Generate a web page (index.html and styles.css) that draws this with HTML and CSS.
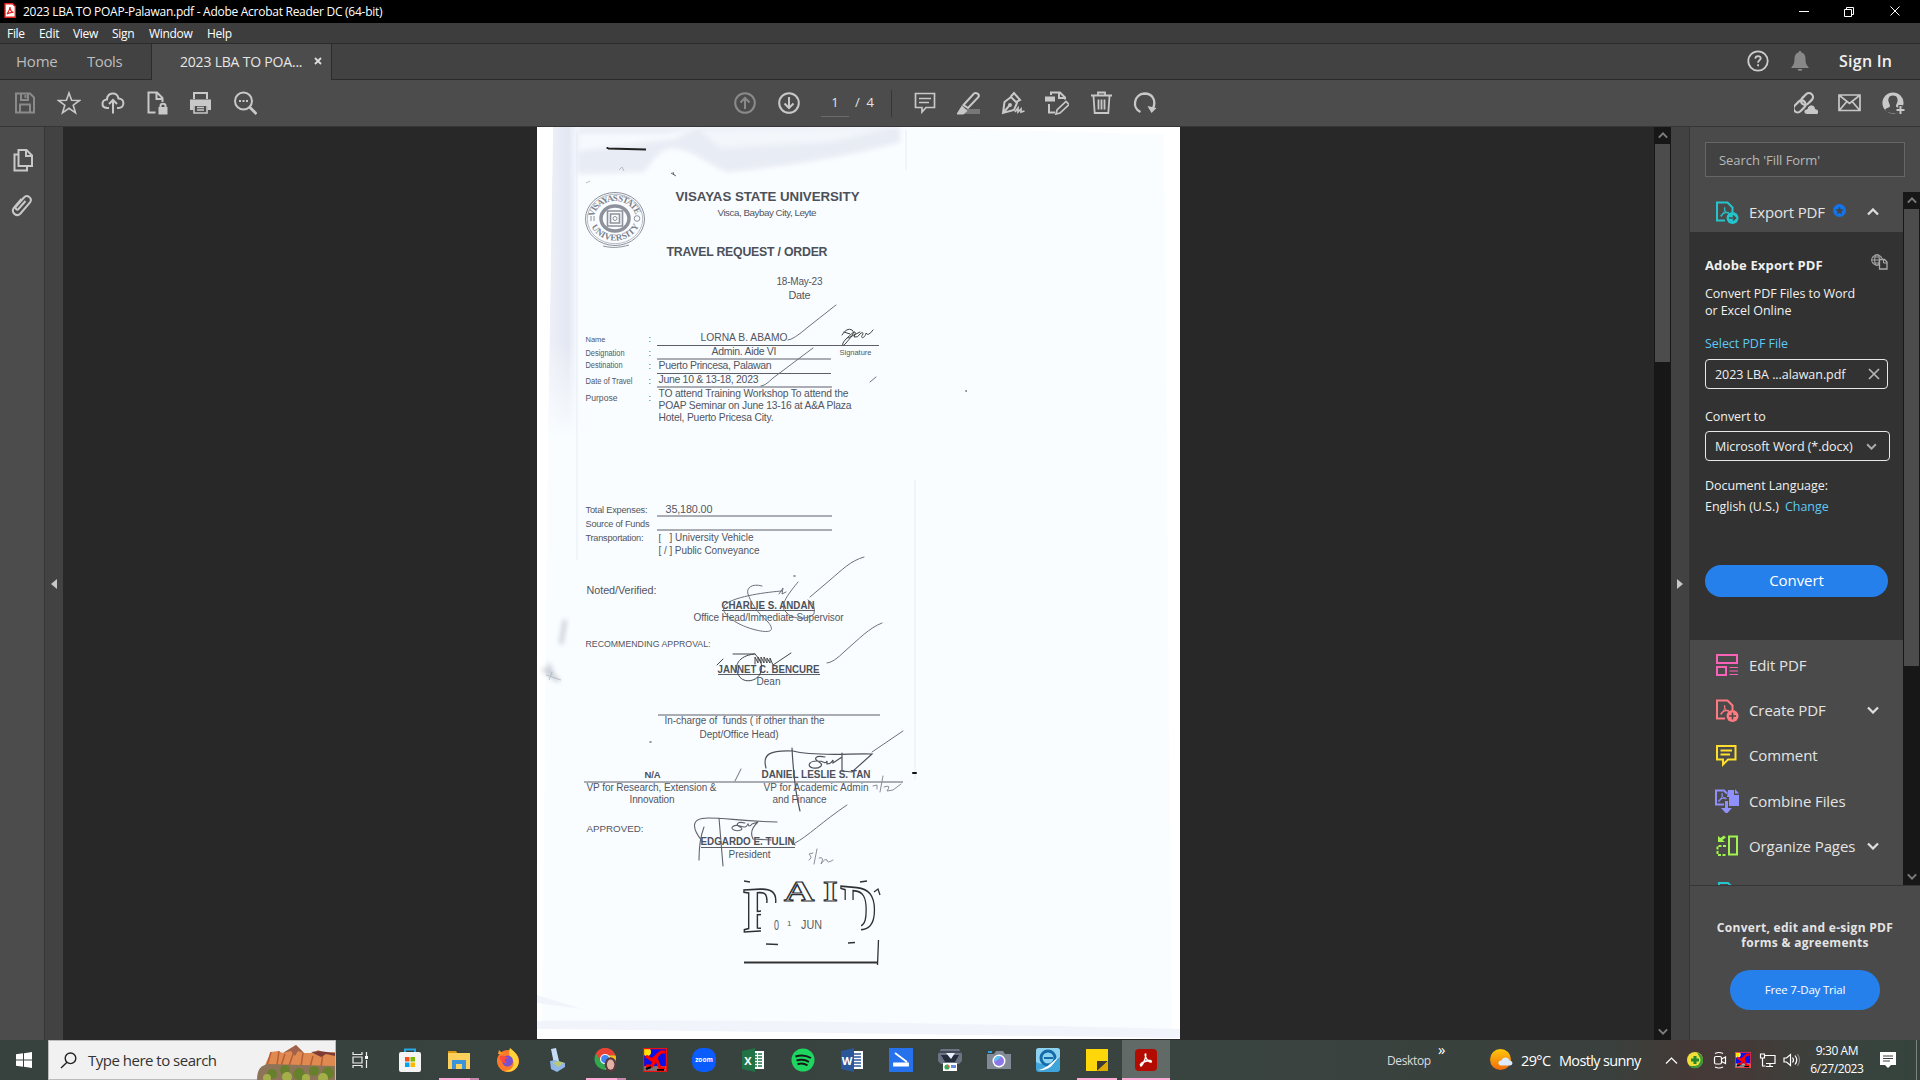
FILE: index.html
```html
<!DOCTYPE html>
<html lang="en">
<head>
<meta charset="utf-8">
<title>2023 LBA TO POAP-Palawan.pdf - Adobe Acrobat Reader DC (64-bit)</title>
<link rel="stylesheet" href="styles.css">
</head>
<body>
<svg class="defs" width="0" height="0">
  <defs>
    <symbol id="acro" viewBox="0 0 16 16"><path d="M2 13c1-2 5-4 11-4.500M7.500 2c-1 0 0 4 2 6s4 3 4 1.500-5-1.300-8 .5-3.500 4-2.500 4S7 8 7.500 5s.5-3 0-3z" fill="none" stroke="currentColor" stroke-width="1.300"/></symbol>
    <symbol id="runner" viewBox="0 0 24 24"><path d="M0 0h24v24H0z" fill="#0a10e8"/><path d="M1 18h22v5H1z" fill="#777"/><circle cx="4" cy="4" r="4" fill="#ffe600"/><path d="M3 8l6 4 9-8 4 0M15 6l-6 12H3M13 10l4 10h5" stroke="#f00" stroke-width="3.200" fill="none"/><path d="M3 21l5-2M14 22h7" stroke="#000" stroke-width="2"/><path d="M.6.600h22.800v22.800H.6z" fill="none" stroke="#e11" stroke-width="1.200"/></symbol>
    <symbol id="chev" viewBox="0 0 12 8"><path d="M1 1.500l5 5 5-5" fill="none" stroke="currentColor" stroke-width="2.300"/></symbol>
  </defs>
</svg>
<div class="window">
  <header class="titlebar">
    <svg class="appicon" width="12" height="15" viewBox="0 0 12 15"><path d="M1 .7h7.500L11.300 3.500v10.800H1z" fill="#fff" stroke="#e2211c" stroke-width="1.400"/><path d="M3 11c1.500-2 3-4 3-7 0 3 1.500 5 3.500 5.500-2-.5-4 0-6.500 1.500z" fill="none" stroke="#e2211c" stroke-width="1.200"/></svg>
    <span class="title">2023 LBA TO POAP-Palawan.pdf - Adobe Acrobat Reader DC (64-bit)</span>
    <svg class="controls" width="104" height="14" viewBox="0 0 104 14" fill="none" stroke="#fff"><path d="M1 7.500h10M46.500 5.500h7v7h-7zM48.500 5.500v-2h7v7h-2M92.500 2.500l9 9M101.500 2.500l-9 9"/></svg>
  </header>
  <nav class="menubar"><span class="m1">File</span><span class="m2">Edit</span><span class="m3">View</span><span class="m4">Sign</span><span class="m5">Window</span><span>Help</span></nav>
  <div class="tabs">
    <div class="tabs-home"><span class="home">Home</span><span class="tools">Tools</span></div>
    <div class="tab"><span>2023 LBA TO POA...</span><svg width="8" height="8" viewBox="0 0 8 8"><path d="M1 1l6 6M7 1L1 7" stroke="#ddd" stroke-width="1.800"/></svg></div>
    <div class="tabs-right">
      <svg class="help" width="22" height="22" viewBox="0 0 22 22" fill="none" stroke="#ccc" stroke-width="1.800"><circle cx="11" cy="11" r="9.700"/><path d="M8.300 8.600c.2-3.400 5.600-3.200 5.400-.2-.1 1.800-2.600 1.900-2.600 4.300M11.100 14.200v2.100"/></svg>
      <svg class="bell" width="18" height="20" viewBox="0 0 18 20" fill="#888"><path d="M9 0c1 0 1.400.7 1.400 1.600 3 .8 4.100 3 4.100 6.400 0 4 .8 6 3 8v1H.5v-1c2.200-2 3-4 3-8 0-3.400 1.100-5.600 4.100-6.400C7.600.7 8 0 9 0zM6.500 18h5c-.5 2.500-4.500 2.500-5 0z"/></svg>
      <b>Sign In</b>
    </div>
  </div>
  <div class="toolbar">
    <div class="group left">
      <svg viewBox="0 0 24 24" class="dim"><path d="M3 2.500h14l4 4V21.500H3zM8 3v6h7V3M7 21.500v-8h10v8M12.500 4v3"/></svg>
      <svg viewBox="0 0 24 24"><path d="M12 2l2.600 7.300 7.900.2-6.300 4.700 2.300 7.600L12 17.300l-6.500 4.500 2.300-7.600L1.500 9.500l7.900-.2z" stroke-width="1.600"/></svg>
      <svg viewBox="0 0 24 24"><path d="M8 17H6C-.5 16.500.5 8.500 6 8.500 6.500 1 16 .5 17.500 7.500c6.500 0 6.500 9.500 0 9.500H16M12 22.500V9.500M8 13l4-4 4 4"/></svg>
      <svg viewBox="0 0 24 24"><path d="M10.500 21.500H3.500v-20h8.500l5.500 5.500v4M11.500 2v6h5.500"/><path d="M13.500 16h9v7.500h-9z" fill="#c8c8c8" stroke="none"/><path d="M15.500 16v-1c0-3 5-3 5 0v1"/></svg>
      <svg viewBox="0 0 24 24"><path d="M5 8V2h13v6"/><path d="M1 8.500h21v10.500h-3.500V15H4.500v4H1z" fill="#c8c8c8" stroke="none"/><path d="M5 14v8h13v-8M8 16.500h7M8 19h7" stroke-width="1.600"/></svg>
      <svg viewBox="0 0 24 24"><circle cx="10.500" cy="10" r="8.500"/><path d="M16.500 16l7 7" stroke-width="2.800"/><path d="M6 10h2M9.500 10h2M13 10h2"/></svg>
    </div>
    <div class="group pages">
      <svg viewBox="0 0 24 24" class="dim"><circle cx="12" cy="12" r="9.800"/><path d="M12 18V7M7.500 11.500L12 7l4.500 4.500"/></svg>
      <svg viewBox="0 0 24 24"><circle cx="12" cy="12" r="9.800"/><path d="M12 6v11M7.500 12.500L12 17l4.500-4.500"/></svg>
    </div>
    <div class="pagenum">1</div><div class="pagecount">/&nbsp; 4</div>
    <div class="group edit">
      <svg viewBox="0 0 24 24"><path d="M2.500 2.500h19v14H13l-4 4.500v-4.500H2.500zM6 7.500h12M6 11.500h10" stroke-width="1.700"/></svg>
      <svg viewBox="0 0 24 24"><path d="M7 18h16v5H7z" fill="#777" stroke="none"/><path d="M6.500 14L17 2.500c2-1.500 6 .5 4.500 3.500L11 17z"/><path d="M5 16l4 4-3 2.500H1z" fill="#c8c8c8"/></svg>
      <svg viewBox="0 0 24 24"><path d="M2 22L3.500 11 10 6l6 6-3 7zM2 22l6.500-7.500M9.500 6L13 2l6 7-4 2"/><circle cx="9" cy="14" r="1"/><path d="M14 21l3-4 0 4 3-3 0 3 3.500-1" stroke-width="1.700"/></svg>
      <svg viewBox="0 0 24 24"><path d="M6 4V1.500h9l5 5v2M14 2v5h5M4 13v8.500h6"/><path d="M0 5.500h10v5H0z" fill="#c8c8c8" stroke="none"/><path d="M11 23l1-4 9-8.500 3 3L15 22z" stroke-width="1.700"/></svg>
      <svg viewBox="0 0 24 24"><path d="M2 4.500h21M9 4V1.500h7V4M4.500 5l1.200 17h13.600L20.500 5M9.500 8.500v10M12.500 8.500v10M15.500 8.500v10" stroke-width="1.800"/></svg>
      <svg viewBox="0 0 24 24"><path d="M7.500 21C-1.500 17 1 3 11.500 2.500c8 0 12 7 8.500 15" stroke-width="2.300"/><path d="M14.500 15l9 2-5 5z" fill="#c8c8c8" stroke="none"/></svg>
    </div>
    <div class="group share">
      <svg viewBox="0 0 24 24"><g transform="rotate(-45 10 11)" stroke-width="2.200"><rect x="-3" y="7" width="13.500" height="8" rx="4"/><rect x="7.500" y="7" width="13.500" height="8" rx="4"/></g><path d="M13 23.500c-5-1-3-6 0-5.500 1-5.500 8-5.500 8.500 0 4 0 4 5.500 1 5.500z" fill="#c8c8c8" stroke="#4c4c4c" stroke-width="1"/></svg>
      <svg viewBox="0 0 24 24"><path d="M1 4h21v15.500H1zM1.500 4.500l10 8 10-8M1.500 19l7-8M21.500 19l-7-8" stroke-width="1.700"/></svg>
      <svg viewBox="0 0 24 24"><circle cx="11" cy="12" r="9.800" fill="#c8c8c8" stroke-width="1.600"/><path d="M11 4.500c4 0 5 3 4.500 6-.5 2-1.500 3-1.500 4.500 0 2 4 1.500 5 4-3 3.500-5 3-8 3s-5.500 0-8-3c1-2.500 5-2 5-4 0-1.500-1-2.500-1.500-4.500-.5-3 .5-6 4.500-6z" fill="#4c4c4c" stroke="none"/><path d="M18.500 14v9.500M14 19h10" stroke="#4c4c4c" stroke-width="4.500"/><path d="M18.500 15v8M14.500 19h8"/></svg>
    </div>
  </div>
  <main class="body">
    <aside class="rail">
      <svg viewBox="0 0 24 24"><path d="M7.500 2h8l5.500 5.500V18H7.500zM15 2.500V8h5.500M7 6.500H3.500v16H16v-4"/></svg>
      <svg viewBox="0 0 24 24"><path d="M16 8l-7 8c-1.500 1.500-4-.5-2.500-2.500l8-9c3-3.500 9 .5 6 5L11 20.500c-4 4-10-1-6.500-6L12 6" transform="translate(-1.500 0)"/></svg>
    </aside>
    <div class="strip"><i class="tri-left"></i></div>
    <section class="canvas">
      <svg class="page" width="643" height="912" viewBox="537 127 643 912">
        <defs>
          <linearGradient id="edge"><stop offset="0" stop-color="#eef1f8"/><stop offset=".7" stop-color="#e3e7f2"/><stop offset="1" stop-color="#f5faff"/></linearGradient>
          <linearGradient id="fade" x2="0" y2="1"><stop offset="0" stop-color="#fff"/><stop offset=".7" stop-color="#fff"/><stop offset="1" stop-color="#000"/></linearGradient>
          <mask id="m"><path d="M537 127h60v310h-60z" fill="url(#fade)"/></mask>
          <filter id="soft" x="-20%" y="-20%" width="140%" height="140%"><feGaussianBlur stdDeviation="2.500"/></filter>
          <path id="arcTop" d="M594 219a21 18 0 0 1 42 0"/>
          <path id="arcBot" d="M589.500 218a25.500 22.500 0 0 0 51 0"/>
        </defs>
        <path d="M537 127h643v912H537z" fill="#f9fdff"/>
        <path d="M553 127h24v310h-29z" fill="url(#edge)" mask="url(#m)"/>
        <path d="M577 127h323v15c-50 14-110 24-172 30-18-6-35-24-58-24-14 4-20 16-26 24l-67 2z" fill="#e8ecf4" filter="url(#soft)"/>
        <path d="M578 133h90l30-6-22 12-98 12z" fill="#f6fafe" filter="url(#soft)"/>
        <path d="M700 130l190-2-60 14-110 6z" fill="#f3f7fc" filter="url(#soft)"/>
        <path d="M537 127h16l-5 300-6 612h-5zM900 127h280v8zM1164 127h16v912h-8z" fill="#fff"/>
        <path d="M537 995l45 14-45-6zM537 1021c200-2 380 2 643 8v10H537z" fill="#f1f4fb"/><path d="M537 1029c220 2 380 6 643 9v1H537z" fill="#fff"/>
        <path d="M577 132V560M906 130v40M915 480v300" stroke="#dfe5ef" stroke-width="1" fill="none" opacity=".7"/>
        <g filter="url(#soft)" opacity=".8"><path d="M543 669l16 12M548 664l6 14M565 620l-4 24" stroke="#aab0be" stroke-width="3"/></g>
        <path d="M546 675l15 5M552 672l-3 8" stroke="#a9adb8" opacity=".7"/>
        <path d="M608 148.500l38 1M607.500 147v2" stroke="#222" stroke-width="1.800"/>
        <path d="M671 173l5 3M673 172l1 3" stroke="#666"/><path d="M619 170l3-3 2 4M586 183l4-2" stroke="#bbb" fill="none"/>
        <g class="seal" fill="none" stroke="#8d919b">
          <ellipse cx="615" cy="219" rx="29.500" ry="26.500"/><ellipse cx="615" cy="219" rx="27.700" ry="24.700" stroke-width=".6"/>
          <ellipse cx="615" cy="218.500" rx="14" ry="12.500" stroke-width="3.500"/><path d="M607.500 211h15v15h-15zM610.500 214h9v9h-9z" stroke-width="1.600"/><circle cx="615" cy="218.500" r="2"/><circle cx="637" cy="218.500" r="2.800"/><path d="M591 216v5M594 216v5M603 246c8 2 16 2 26-1"/>
          <text><textPath href="#arcTop" startOffset="2" textLength="55">VISAYAS STATE</textPath></text>
          <text><textPath href="#arcBot" startOffset="9" textLength="58">UNIVERSITY</textPath></text>
        </g>
        <g class="doc" transform="translate(-.5 -.5)">
          <text class="b" x="676" y="201.300" font-size="13.300" textLength="184">VISAYAS STATE UNIVERSITY</text>
          <text x="718" y="216" font-size="9.800" textLength="99">Visca, Baybay City, Leyte</text>
          <text class="b" x="667" y="256.500" font-size="12.300" textLength="161">TRAVEL REQUEST / ORDER</text>
          <text x="777" y="285" font-size="10" textLength="46">18-May-23</text>
          <text x="789" y="299.500" font-size="10.800" textLength="22">Date</text>
          <text x="586" y="342.500" font-size="8" textLength="20" lengthAdjust="spacingAndGlyphs">Name</text><text x="649" y="342" font-size="9">:</text>
          <text x="701" y="341.500" font-size="11.500" textLength="87" lengthAdjust="spacingAndGlyphs">LORNA B. ABAMO</text>
          <text x="840" y="355" font-size="8" textLength="32" lengthAdjust="spacingAndGlyphs">Signature</text>
          <text x="586" y="356.500" font-size="8.500" textLength="39" lengthAdjust="spacingAndGlyphs">Designation</text><text x="649" y="356.500" font-size="9">:</text>
          <text x="712" y="355.500" font-size="10.500" textLength="65">Admin. Aide VI</text>
          <text x="586" y="368" font-size="8.500" textLength="37" lengthAdjust="spacingAndGlyphs">Destination</text><text x="649" y="369" font-size="9">:</text>
          <text x="659" y="369" font-size="10.500" textLength="113">Puerto Princesa, Palawan</text>
          <text x="586" y="384.500" font-size="9" textLength="47" lengthAdjust="spacingAndGlyphs">Date of Travel</text><text x="649" y="384" font-size="9">:</text>
          <text x="659" y="383.500" font-size="10.500" textLength="100">June 10 &amp; 13-18, 2023</text>
          <text x="586" y="401" font-size="9" textLength="32" lengthAdjust="spacingAndGlyphs">Purpose</text><text x="649" y="401" font-size="9">:</text>
          <text x="659" y="397" font-size="10.300" textLength="190">TO attend Training Workshop To attend the</text>
          <text x="659" y="409" font-size="10.300" textLength="193">POAP Seminar on June 13-16 at A&amp;A Plaza</text>
          <text x="659" y="421.500" font-size="10.300" textLength="115">Hotel, Puerto Pricesa City.</text>
          <text x="586" y="513.500" font-size="9.200" textLength="62">Total Expenses:</text>
          <text x="666" y="513" font-size="10.800" textLength="47">35,180.00</text>
          <text x="586" y="527" font-size="9.200" textLength="64">Source of Funds</text>
          <text x="586" y="541" font-size="9.200" textLength="58">Transportation:</text>
          <text x="659" y="541" font-size="9.500">[</text><text x="670" y="541" font-size="10" textLength="84">] University Vehicle</text>
          <text x="659" y="554.500" font-size="10" textLength="101">[ / ] Public Conveyance</text>
          <text x="587" y="594.500" font-size="10.800" textLength="70">Noted/Verified:</text>
          <text class="b" x="722" y="609" font-size="10.300" textLength="93" lengthAdjust="spacingAndGlyphs">CHARLIE S. ANDAN</text>
          <text x="694" y="621.500" font-size="10" textLength="150">Office Head/Immediate Supervisor</text>
          <text x="586" y="647" font-size="9.200" textLength="125" lengthAdjust="spacingAndGlyphs">RECOMMENDING APPROVAL:</text>
          <text class="b" x="718" y="673" font-size="10.300" textLength="102" lengthAdjust="spacingAndGlyphs">JANNET C. BENCURE</text>
          <text x="757" y="685.500" font-size="10" textLength="24">Dean</text>
          <text x="665" y="724.500" font-size="10" textLength="160">In-charge of &#160;funds ( if other than the</text>
          <text x="700" y="738" font-size="10" textLength="79">Dept/Office Head)</text>
          <text class="b" x="645" y="778" font-size="9.500" textLength="16">N/A</text>
          <text class="b" x="762" y="778.500" font-size="10.300" textLength="109" lengthAdjust="spacingAndGlyphs">DANIEL LESLIE S. TAN</text>
          <text x="587" y="791.500" font-size="10" textLength="130">VP for Research, Extension &amp;</text>
          <text x="630" y="803" font-size="10" textLength="45">Innovation</text>
          <text x="764" y="791.500" font-size="10" textLength="105">VP for Academic Admin</text>
          <text x="773" y="803.500" font-size="10" textLength="54">and Finance</text>
          <text x="587" y="832" font-size="9.800" textLength="57" lengthAdjust="spacingAndGlyphs">APPROVED:</text>
          <text class="b" x="701" y="845.500" font-size="10.300" textLength="94" lengthAdjust="spacingAndGlyphs">EDGARDO E. TULIN</text>
          <text x="729" y="858" font-size="10" textLength="42">President</text>
        </g>
        <path d="M657 345.500h222M657 359h174M657 373.500h174M657 387h175M657 516h175M657 530h175M722 610.500h93M718 674.500h102M658 715h222M584 782h319M701 847.500h94" stroke="#5d606b" stroke-width="1.100"/>
        <g fill="none" stroke="#6e717b" stroke-width="1" stroke-linecap="round">
          <path d="M788 340q5 0 20-13l28-22M761 386q4 0 12-8l40-30M870 382l6-5M810 597l20-17c12-10 20-19 34-23M827 663q6 0 18-12c14-12 24-23 37-28M872 752l31-21M795 843c12-6 28-22 52-38M735 781l6-12"/>
          <path d="M842 335q5-8 10-5c4 3-2 8-6 13s-5 1 0-4q8-8 9-7t-1 5q4 1 6-3 3-3 3 0c-4 5 2 5 3-1q2 4 7-3M844 332l6 2M848 338l12-6" stroke="#444"/>
          <path d="M762 586c-10-3-16 2-14 8s8 18 20 28c10 12-4 10-12 8-18-4-40-18-30-26s42-12 56-13M779 594l4-6-1 6 4-2M798 582c-8 10-20 24-12 30 6 8 22 8 28 2q2-10-6-14"/>
          <path d="M717 665l6-6M733 654h22M754 654c-16 2-20 12-16 20 4 10 18 8 22 0 4-10 0-14-5-20M755 664v-7l3 6v-6l3 6v-6l3 6v-6l3 6v-5l3 5v-5l3 7 18-12" stroke="#444"/>
          <path d="M766 768c-4-14 4-18 27-17 22 6 60 2 79 3l-20 18-10-1v-18M792 748q2 40 8 63M825 757c-10-2-12 2-6 5s0 7-6 6-5-7 4-7 8 4 10 0v3q4 0 6-4v3l9-6" stroke="#4f525b" stroke-width="1.200"/>
          <path d="M699 860q0-20 5-33M702 841c-8-10-14-23 6-23 20 0 30 3 69 4M719 818l4 48M745 823c-8-2-10 2-5 4s-1 5-6 3 0-6 6-4 6 1 8-2q1 4 4 0l6-2c-8 7-7 13-5 17l18 1M791 839l4 6" stroke="#5f626c" stroke-width="1.100"/>
          <path d="M873 786l4-1v4M883 776l-3 16M884 787q8-3 3 4l6-1 8-6M813 853l-4 1q4 4 0 6M817 849l-3 15M819 858q6-2 2 6 4-6 6-4 0 4 6 0" stroke="#8a8d96"/>
          <path d="M913 773h3" stroke="#111" stroke-width="2"/><path d="M794 576h1M650 742h1" stroke-width="1.500"/><circle cx="966" cy="391" r=".4"/>
        </g>
        <g class="stamp">
          <text transform="matrix(.88 -.05 0 1 743 932)" font-size="64">P</text>
          <text class="thin" transform="matrix(1.450 0 0 1 784 901)" font-size="29">A</text>
          <text class="thin" transform="matrix(1.300 0 0 1 823 901)" font-size="29">I</text>
          <text transform="matrix(.8 .07 0 1 840 928)" font-size="64">D</text>
          <path d="M761 903h100v32H761zM840 900h21v34h-21z" fill="#f9fdff" stroke="none"/>
          <path d="M744 881l6 1M860 882l7-1M874 892l4-3 2 6M766 944l12 .5M848 943l7-.5M878.500 940l-1 25" stroke="#333" stroke-width="1.300"/>
          <path d="M744 962.500h134" stroke="#333" stroke-width="2.200"/>
        </g>
        <g class="stampdate"><text x="774" y="929.500" textLength="5" lengthAdjust="spacingAndGlyphs">0</text><text x="787" y="926" font-size="8">1</text><text x="801" y="928.500" textLength="21" lengthAdjust="spacingAndGlyphs">JUN</text></g>
      </svg>
    </section>
    <div class="scroll doc-scroll"><svg class="up" width="10" height="7"><use href="#chev"/></svg><i></i><svg class="down" width="10" height="7"><use href="#chev"/></svg></div>
    <div class="strip right"><i class="tri-right"></i></div>
    <aside class="panel">
      <div class="search">Search 'Fill Form'</div>
      <div class="panel-main">
        <div class="panel-list">
          <div class="tool head">
            <svg class="ti teal" viewBox="0 0 24 24"><path d="M10 20.500H2v-18h10.500l5 5V12"/><use href="#acro" x="4" y="6" width="12" height="12"/><circle cx="17.500" cy="18" r="6" class="solid"/><path d="M14 18h6M18 15.500l2.500 2.500-2.500 2.500" stroke="#4a4a4a" stroke-width="1.600"/></svg>
            <span>Export PDF</span>
            <svg class="badge" width="13" height="13" viewBox="0 0 13 13"><circle cx="6.500" cy="6.500" r="6.500" fill="#1473e6"/><path d="M6.500 2.500l1.100 2.800 3 .2-2.300 1.900.8 3-2.600-1.700-2.600 1.700.8-3-2.300-1.900 3-.2z" fill="#444"/></svg>
            <svg class="ch flip" width="12" height="8"><use href="#chev"/></svg>
          </div>
          <div class="export">
            <div class="ex-head"><b>Adobe Export PDF</b><svg width="17" height="16" viewBox="0 0 17 16" fill="none" stroke="#aaa"><circle cx="6" cy="6" r="5.300"/><ellipse cx="6" cy="6" rx="2.300" ry="5.300"/><path d="M.5 6h11M1.500 3h9M1.500 9h9"/><path d="M8.500 5.500h5l2.500 2.500v7H8.500z" fill="#323232" stroke-width="1.300"/><path d="M12.500 6v3H16"/></svg></div>
            <p class="desc">Convert PDF Files to Word<br>or Excel Online</p>
            <a class="select">Select PDF File</a>
            <div class="field file"><span>2023 LBA ...alawan.pdf</span><svg width="12" height="12" viewBox="0 0 12 12"><path d="M1 1l10 10M11 1L1 11" stroke="#b5b5b5" stroke-width="1.700"/></svg></div>
            <label>Convert to</label>
            <div class="field format"><span>Microsoft Word (*.docx)</span><svg width="11" height="7"><use href="#chev"/></svg></div>
            <p class="lang">Document Language:<br>English (U.S.) <a>Change</a></p>
            <div class="convert">Convert</div>
          </div>
          <div class="tools-list">
            <div class="tool"><svg class="ti pink" viewBox="0 0 24 24"><path d="M2 2h20v8H2zM2 14h9v8H2z"/><path d="M14.500 14.500H23M14.500 18H23M14.500 21.500H23" stroke-width="1"/></svg><span>Edit PDF</span></div>
            <div class="tool"><svg class="ti red" viewBox="0 0 24 24"><path d="M10 20.500H2v-18h10.500l5 5V12"/><use href="#acro" x="4" y="6" width="12" height="12"/><circle cx="17.500" cy="18" r="6" class="solid"/><path d="M14 18h7M17.500 14.500v7" stroke="#4a4a4a" stroke-width="1.600"/></svg><span>Create PDF</span><svg class="ch" width="12" height="8"><use href="#chev"/></svg></div>
            <div class="tool"><svg class="ti yellow" viewBox="0 0 24 24"><path d="M2 3h18.500v13.500H13l-5 5v-5H2zM5.500 7.500H17M5.500 11.500H15"/></svg><span>Comment</span></div>
            <div class="tool"><svg class="ti violet" viewBox="0 0 24 24"><path d="M9 15.500H1V1.500h8l3 3"/><use href="#acro" x="2" y="3" width="11" height="11"/><path d="M13 1h6v5h5v11H14V8h-2zM20 0l4 4.500h-4zM10 12h3v7h4l-5.500 6L6 19h4z" class="solid"/></svg><span>Combine Files</span></div>
            <div class="tool"><svg class="ti green" viewBox="0 0 24 24"><path d="M14 2.500h8v18h-8z"/><path d="M11 12H2.500v9H12" stroke-dasharray="3 1.500"/><path d="M3 2v6h7L7.500 6 11 3.500 9 1.500 5.500 4z" class="solid"/></svg><span>Organize Pages</span><svg class="ch" width="12" height="8"><use href="#chev"/></svg></div>
            <div class="tool"><svg class="ti teal" viewBox="0 0 24 24"><path d="M10 21H4V3h9l6 6v3"/></svg></div>
          </div>
        </div>
        <div class="scroll panel-scroll"><svg class="up" width="10" height="7"><use href="#chev"/></svg><i></i><svg class="down" width="10" height="7"><use href="#chev"/></svg></div>
      </div>
      <footer class="promo"><b>Convert, edit and e-sign PDF<br>forms &amp; agreements</b><div class="trial">Free 7-Day Trial</div></footer>
    </aside>
  </main>
  <footer class="taskbar">
    <svg class="start" width="16" height="16" viewBox="0 0 16 16" fill="#fff"><path d="M0 2.300l7-1v6.200H0zM8 1.200L16 0v7.500H8zM0 8.500h7v6.200l-7-1zM8 8.500h8V16l-8-1.200z"/></svg>
    <div class="tsearch">
      <svg width="17" height="17" viewBox="0 0 17 17" fill="none" stroke="#222" stroke-width="1.400"><circle cx="10.500" cy="6.300" r="5.300"/><path d="M7 10.300L1 16"/></svg>
      <span>Type here to search</span>
      <svg class="mount" width="78" height="37" viewBox="0 0 78 37"><path d="M7 24l7-15 7-1 5 2 13-8 8 8 9 0 5-3 7 3 10-1v28H7z" fill="#df8a50"/><path d="M14 9l-4 14M22 8l-2 14M28 11l-4 12M38 5l-6 18M46 10l-2 13M56 13l-3 11M66 10l-2 14" stroke="#b95c36" stroke-width="1.500"/><path d="M26 10l13-8 8 8-6-2-3 5-4-5z" fill="#a0624a"/><path d="M54 9l8-1 16 2v3l-9-2-5 3z" fill="#7d3c35"/><path d="M0 37C0 26 4 22 12 21l66 2v14z" fill="#8d7459"/><g fill="#66802c"><circle cx="15" cy="31" r="5"/><circle cx="28" cy="27" r="5"/><circle cx="42" cy="31" r="6"/><circle cx="57" cy="28" r="5"/><circle cx="71" cy="30" r="6"/></g><g fill="#a5af49"><circle cx="10" cy="35" r="4"/><circle cx="30" cy="34" r="5"/><circle cx="49" cy="35" r="4"/><circle cx="66" cy="35" r="5"/></g></svg>
    </div>
    <svg class="tview" width="17" height="16" viewBox="0 0 17 16" fill="none" stroke="#eee" stroke-width="1.200"><path d="M1 0v2.500h9V0M1 16v-2.500h9V16M1 5h9v6H1zM14.500 0v4M14.500 8v8"/><path d="M13 4h3v3h-3z" fill="#fff" stroke="none"/></svg>
    <div class="apps">
      <div><svg viewBox="0 0 24 24"><path d="M7 6V1.500h10V6" fill="none" stroke="#29a9e8" stroke-width="2"/><rect x="1" y="4" width="22" height="20" rx="2" fill="#f4f4f4"/><path d="M7 9h4.500v4.500H7z" fill="#f25022"/><path d="M12.500 9H17v4.500h-4.500z" fill="#7fba00"/><path d="M7 14.500h4.500V19H7z" fill="#00a4ef"/><path d="M12.500 14.500H17V19h-4.500z" fill="#ffb900"/></svg></div>
      <div class="run stack"><svg viewBox="0 0 24 24"><path d="M1 3h8l2 3H1z" fill="#d99a13"/><path d="M1 5h22v16H1z" fill="#fcd05a"/><path d="M5 12h14v9h-4v-5H9v5H5z" fill="#3b93da"/></svg></div>
      <div><svg viewBox="0 0 24 24"><circle cx="12" cy="13" r="11" fill="#ff7a28"/><path d="M14 0c8 6 10 12 8 17S15 25 8 23c8 0 12-6 8-12-4-3-3-8-2-11z" fill="#ffd23c"/><path d="M2 6l1-4 4 4z" fill="#ff9d28"/><circle cx="11.500" cy="13" r="5.500" fill="#7850d2"/><path d="M4 8c4-1 6 1 8 3-4-1-4 2-1 4-4 1-8-3-7-7z" fill="#ff4a3a"/></svg></div>
      <div><svg viewBox="0 0 24 24"><path d="M6 1l5-1 3 13-5 3z" fill="#c4dcf6"/><path d="M5 13l5-1 10 3v4l-8 5-6-3z" fill="#8fb6e6"/><path d="M8 15l5-2 6 2-6 4z" fill="#b9c977"/></svg></div>
      <div class="run stack"><svg viewBox="0 0 26 26"><circle cx="12" cy="12" r="11.500" fill="#2fa84f"/><path d="M2 6C8-4 20-1 23.500 8H12L7 14z" fill="#ea4335"/><path d="M23.500 8c2 10-6 16-12 15l6-9-2-6z" fill="#fbc116"/><circle cx="12" cy="12" r="5.500" fill="#fff"/><circle cx="12" cy="12" r="4.300" fill="#4285f4"/><ellipse cx="18" cy="18" rx="6.500" ry="8" fill="#5a3940"/><ellipse cx="18" cy="18" rx="4" ry="5.500" fill="#e2b3a4"/></svg></div>
      <div><svg viewBox="0 0 24 24"><use href="#runner"/></svg></div>
      <div><svg viewBox="0 0 24 24"><rect width="24" height="24" rx="10" fill="#0b5cff"/><text x="12" y="14" class="zoomtxt">zoom</text></svg></div>
      <div><svg viewBox="0 0 24 24"><path d="M11 3h12v18H11z" fill="#fff"/><path d="M13 6h3M17 6h4M13 9h3M17 9h4M13 12h3M17 12h4M13 15h3M17 15h4M13 18h3M17 18h4" stroke="#217346" stroke-width="1.500"/><path d="M1 3l13-3v24L1 21z" fill="#217346"/><text x="7" y="16.500" class="office">X</text></svg></div>
      <div><svg viewBox="0 0 24 24"><circle cx="12" cy="12" r="11.500" fill="#1ed760"/><path d="M4.500 8.500c5-1.500 11-1 15.500 1.500M5.500 12.500c4-1.200 9-.8 12.500 1.300M6.500 16.200c3-.9 7-.6 10 1.100" fill="none" stroke="#151c17" stroke-width="2"/></svg></div>
      <div><svg viewBox="0 0 24 24"><path d="M11 3h12v18H11z" fill="#fff"/><path d="M14 6h7M14 9h7M14 12h7M14 15h7M14 18h7" stroke="#2b579a" stroke-width="1.500"/><path d="M1 3l13-3v24L1 21z" fill="#2b579a"/><text x="7" y="16.500" class="office">W</text></svg></div>
      <div><svg viewBox="0 0 24 24"><path d="M0 0h24v24H0z" fill="#2672ec"/><path d="M6 5l12 9M5 15.500h14v2H5z" fill="none" stroke="#fff" stroke-width="1.800"/></svg></div>
      <div><svg viewBox="0 0 24 24"><path d="M3 1h18l3 5v7l-3 3H3l-3-3V6z" fill="#6b7482"/><path d="M1 4h22" stroke="#434a57" stroke-width="2"/><path d="M3 7h18l-4 7H7z" fill="#252d3d"/><path d="M8 5h9l-4 6z" fill="#eaf0ff"/><path d="M5 15h14v8H5z" fill="#fff"/><circle cx="9" cy="19" r="2.600" fill="#39a85a"/><path d="M9 16.400a2.600 2.600 0 0 1 2.600 2.600H9z" fill="#ef5d3b"/><path d="M13 17h5v3h-5z" fill="#6989e8"/></svg></div>
      <div><svg viewBox="0 0 24 24"><path d="M0 6h7l2-3h7l2 3h6v15H0z" fill="#818b96"/><path d="M1 3h4v2H1z" fill="#2aa2e8"/><circle cx="12" cy="13" r="6.500" fill="#fff"/><circle cx="12" cy="13" r="5" fill="#8b77ea"/><path d="M8 14a4 4 0 0 1 6-5z" fill="#59c6ef"/></svg></div>
      <div><svg viewBox="0 0 24 24"><rect width="24" height="24" rx="3" fill="#3fa4da"/><path d="M0 14c8 4 16 2 24-5V3q0-3-3-3H3Q0 0 0 3z" fill="#8ed2f1"/><circle cx="12" cy="10" r="7" fill="none" stroke="#156ca8" stroke-width="3"/><path d="M8 10h9" stroke="#156ca8" stroke-width="2"/><path d="M2 22c6-1 12-5 20-13-5 10-11 14-20 13z" fill="#fff"/></svg></div>
      <div class="run"><svg viewBox="0 0 24 24"><path d="M1 1h22v22H1z" fill="#ffd60a"/><path d="M12 13h11L12 23z" fill="#3c3a32"/><path d="M23 13v10H12z" fill="#e0a800"/></svg></div>
      <div class="run active"><svg viewBox="0 0 24 24"><rect x="1" y="1" width="22" height="22" rx="4" fill="#b30b00"/><use href="#acro" x="4" y="4" width="16" height="16" color="#fff"/></svg></div>
    </div>
    <span class="desk">Desktop</span><span class="more">»</span>
    <svg class="sun" width="23" height="22" viewBox="0 0 23 22"><defs><linearGradient id="sg" x2="0" y2="1"><stop stop-color="#ffc80a"/><stop offset="1" stop-color="#f26b0a"/></linearGradient></defs><circle cx="10.500" cy="10.500" r="10.500" fill="url(#sg)"/><path d="M11 16.500c-4-.5-3-5.500.5-5 1-4 7-4 8 0 4 .5 3.500 5 .5 5z" fill="#dbeafc"/></svg>
    <span class="temp">29°C</span><span class="sky">Mostly sunny</span>
    <svg class="tray" width="136" height="20" viewBox="0 0 136 20" fill="none" stroke="#fff" stroke-width="1.200">
      <path d="M1 13.500l5.500-5.500 5.500 5.500"/><circle cx="30" cy="10" r="8" fill="#f1de38" stroke="none"/><path d="M32 2.500a8 8 0 1 1-8 13c8 2 14-4 8-13z" fill="#38983b" stroke="none"/><circle cx="29.500" cy="10" r="6" fill="#f1de38" stroke="none"/><path d="M30 6v8M26 10h8" stroke="#23852c" stroke-width="3"/>
      <rect x="49.500" y="6.500" width="7" height="7.500" rx="1.500"/><path d="M56.500 9l4-2v6.500l-4-2M50 3.500q4-2 8 0M50 17q4 2 8 0"/>
      <use href="#runner" x="70" y="2" width="16" height="16"/>
      <path d="M99 5.500h11v8h-9M105 14v2.500M101 16.500h7M95.500 4h4v4h-4zM97.500 8v8h3"/>
      <path d="M119 8h2.500l4-3.500v11L121.500 12H119zM127.500 7.500q2 2.500 0 5M130 5.500q3.500 4.500 0 9"/><path d="M132.500 4q4 6 0 12" stroke="#888"/>
    </svg>
    <div class="clock">9:30 AM<br>6/27/2023</div>
    <svg class="notif" width="16" height="16" viewBox="0 0 16 16"><path d="M0 0h16v13h-5l-3 3-3-3H0z" fill="#fff"/><path d="M3 4h10M3 6.500h10M3 9h7" stroke="#39423e"/></svg>
    <i class="peek"></i>
  </footer>
</div>
</body>
</html>
```
FILE: styles.css
```css
* { box-sizing: border-box; }
body { margin: 0; background: #282828; font-family: "Open Sans", "Noto Sans", sans-serif; color: #e4e4e4; overflow: hidden; }
p { margin: 0; }
svg { flex: none; display: block; }
.defs { position: absolute; }
.window { width: 1920px; height: 1080px; display: flex; flex-direction: column; white-space: nowrap; }

.titlebar { height: 23px; background: #000; display: flex; align-items: center; padding: 0 18px 2px 4px; font-size: 12px; color: #fff; }
.title { margin: 2px 0 0 7px; letter-spacing: -.27px; }
.controls { margin-left: auto; }
.menubar { height: 21px; background: #3d3d3d; border-bottom: 1px solid #2b2b2b; display: flex; align-items: center; padding: 0 0 0 7px; font-size: 12px; letter-spacing: -.3px; color: #fff; }
.m1 { width: 32px; } .m2 { width: 34px; } .m3 { width: 39px; } .m4 { width: 37px; } .m5 { width: 58px; }

.tabs { height: 36px; background: #424242; display: flex; }
.tabs-home { width: 152px; border-right: 1px solid #2b2b2b; border-bottom: 1px solid #2b2b2b; display: flex; align-items: center; padding: 0 0 2px 16px; font-size: 15px; letter-spacing: -.2px; color: #bdbdbd; }
.home { width: 71px; }
.tools { letter-spacing: -.4px; }
.tab { width: 180px; background: #4c4c4c; border-right: 1px solid #2b2b2b; display: flex; align-items: center; padding: 0 0 2px 28px; font-size: 14px; letter-spacing: -.2px; color: #e6e6e6; }
.tab span { width: 134px; }
.tabs-right { flex: 1; border-bottom: 1px solid #2b2b2b; display: flex; align-items: center; justify-content: flex-end; padding: 0 25px 1px 0; font-size: 16px; }
.help { margin-right: 22px; } .bell { margin-right: 30px; }
.tabs-right b { font-weight: 600; width: 56px; letter-spacing: .25px; color: #f0f0f0; }

.toolbar { height: 47px; background: #4c4c4c; border-bottom: 1px solid #363636; display: flex; align-items: center; }
.group { display: flex; gap: 20px; }
.group svg, .rail svg { width: 24px; height: 24px; fill: none; stroke: #c8c8c8; stroke-width: 2; }
.group .dim { opacity: .5; }
.left { margin-left: 13px; }
.pages { margin-left: 476px; }
.pagenum { width: 28px; height: 27px; margin-left: 20px; border-bottom: 1px solid #6c6c6c; text-align: center; font-size: 13px; line-height: 25px; }
.pagecount { width: 43px; height: 27px; padding-left: 6px; border-right: 1px solid #363636; font-size: 13px; line-height: 25px; }
.edit { margin-left: 21px; }
.share { margin-left: auto; margin-right: 14px; }

.body { height: 913px; display: flex; }
.rail { width: 44px; background: #4c4c4c; padding: 21px 0 0 11px; display: flex; flex-direction: column; gap: 21px; }
.strip { width: 19px; background: #424242; border-left: 1px solid #363636; display: flex; align-items: center; justify-content: center; }
.strip.right { width: 19px; border-left: 0; border-right: 1px solid #363636; }
.strip i { width: 0; height: 0; border: 6px solid transparent; }
.strip .tri-left { border-width: 5.500px 6px 5.500px 0; border-right-color: #c8c8c8; }
.strip .tri-right { border-width: 5.500px 0 5.500px 6px; border-left-color: #c8c8c8; }
.canvas { width: 1591px; background: #282828; padding-left: 474px; }
.doc { font-family: "Liberation Sans", Arial, sans-serif; fill: #52555f; }
.doc .b { font-weight: bold; fill: #4d5059; }
.seal text { font: bold 9px "Liberation Serif", serif; fill: #7d818b; stroke: none; }
.stamp { font-family: "Liberation Serif", serif; font-weight: bold; fill: none; stroke: #2f3035; stroke-width: 1.600; }
.stamp .thin { stroke-width: 1.100; font-weight: bold; }
.stampdate { font: 13px "Liberation Sans", sans-serif; fill: #5a5c62; }
.stampdate text:first-child { font-size: 14px; }

.scroll { width: 17px; background: #171717; display: flex; flex-direction: column; align-items: center; color: #7d7d7d; }
.scroll .up { transform: scaleY(-1); margin: 5px 0; }
.scroll i { width: 15px; background: #4c4c4c; }
.scroll .down { margin-top: auto; margin-bottom: 5px; }
.doc-scroll i { height: 218px; }
.panel-scroll i { height: 457px; }

.panel { width: 230px; background: #4a4a4a; display: flex; flex-direction: column; padding-top: 15px; }
.search { width: 200px; height: 35px; margin-left: 15px; border: 1px solid #666; background: #424242; font-size: 13px; line-height: 34px; padding-left: 13px; letter-spacing: -.05px; color: #b8b8b8; }
.panel-main { height: 709px; display: flex; border-bottom: 1px solid #363636; }
.panel-list { width: 213px; height: 708px; overflow: hidden; }
.panel-scroll { margin-top: 15px; }
.tool { height: 45.400px; display: flex; align-items: center; padding-left: 25px; font-size: 15px; letter-spacing: -.1px; }
.tool span { margin-left: 10px; }
.tools-list { padding-top: 2px; }
.head { height: 55px; padding-top: 14px; letter-spacing: -.15px; }
.head .badge { margin: -2px 0 0 8px; }
.ch { margin-left: auto; margin-right: 24px; color: #ddd; }
.flip { transform: scaleY(-1); }
.ti { width: 24px; height: 24px; fill: none; stroke: currentColor; stroke-width: 2; }
.solid { fill: currentColor; stroke: none; }
.teal { color: #25c4cc; } .pink { color: #f763b6; } .red { color: #ff7b82; } .yellow { color: #ffdf2b; } .violet { color: #9090fa; } .green { color: #a1f34f; }
.export { height: 408px; background: #323232; padding: 22px 0 0 15px; font-size: 12.500px; letter-spacing: -.05px; color: #f0f0f0; }
.ex-head { display: flex; justify-content: space-between; width: 183px; height: 31px; line-height: 22px; font-size: 13px; letter-spacing: .15px; }
.desc { line-height: 17px; height: 50px; }
a { color: #5fc9f5; }
.select { display: block; line-height: 18px; height: 24px; }
.field { width: 183px; height: 30px; border: 1px solid #e8e8e8; border-radius: 4px; display: flex; align-items: center; justify-content: space-between; padding: 0 7px 0 9px; }
.format { width: 185px; padding-right: 12px; }
.format span { padding-top: 1px; }
.format svg { color: #aaa; }
label { display: block; height: 42px; padding-top: 19px; line-height: 18px; }
.lang { line-height: 21px; margin-top: 14px; height: 90px; }
.lang a { margin-left: 3px; }
.convert { width: 183px; height: 32px; border-radius: 16px; background: #2680eb; text-align: center; font-size: 15px; line-height: 31px; color: #fff; }
.promo { flex: 1; padding: 34px 0 0 15px; text-align: center; width: 215px; font-size: 12px; line-height: 15px; letter-spacing: .3px; }
.trial { width: 150px; height: 40px; border-radius: 20px; background: #2680eb; margin: 20px 0 0 25px; line-height: 40px; font-size: 11.500px; letter-spacing: -.2px; color: #fff; }

.taskbar { height: 40px; background: linear-gradient(90deg, #37413d 0, #39433f 65%, #3a403d 84%, #443936 88%, #443a37 91%, #39433f 96%, #36433d); display: flex; align-items: center; color: #fff; }
.start { margin-left: 16px; }
.tsearch { width: 288px; height: 40px; margin-left: 16px; background: #f1f1f1; border: 1px solid #bbb; display: flex; align-items: center; padding-left: 11px; color: #333; font-size: 15px; letter-spacing: -.5px; }
.tsearch span { margin-left: 11px; width: 170px; }
.mount { margin-top: 3px; }
.tview { margin-left: 16px; }
.apps { display: flex; margin-left: 17px; gap: 1.070px; }
.apps div { width: 48px; height: 40px; display: flex; align-items: center; justify-content: center; }
.apps svg { width: 24px; height: 24px; }
.apps .run { background: linear-gradient(#ffaad8, #ffaad8) 50% 100% / 40px 2px no-repeat; }
.apps .stack { background: linear-gradient(90deg, #ffaad8 78%, #c586ab 78%) 50% 100% / 40px 2px no-repeat; }
.apps .active { background: linear-gradient(#ffaad8, #ffaad8) 0 100% / 48px 2px no-repeat #616a66; }
.zoomtxt { font: bold 6.500px "Open Sans", sans-serif; fill: #fff; text-anchor: middle; }
.office { font: bold 11px "Open Sans", sans-serif; fill: #fff; text-anchor: middle; }
.desk { margin-left: 217px; width: 51px; font-size: 12px; letter-spacing: -.35px; color: #ddd; }
.more { width: 52px; font-size: 15px; margin-top: -23px; }
.temp { margin-left: 8px; width: 38px; font-size: 14.500px; letter-spacing: -.6px; }
.sky { width: 106px; font-size: 14.500px; letter-spacing: -.65px; }
.clock { width: 72px; text-align: center; font-size: 12px; line-height: 18px; letter-spacing: -.4px; }
.notif { margin-left: 7px; }
.peek { width: 1px; height: 40px; margin-left: 20px; background: #7b827f; }
```
